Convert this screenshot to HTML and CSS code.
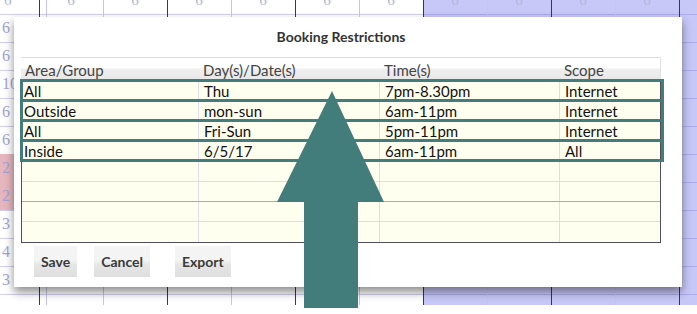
FILE: index.html
```html
<!DOCTYPE html>
<html lang="en">
<head>
  <meta charset="UTF-8">
  <title>Booking Restrictions</title>
  <link rel="stylesheet" href="styles.css">
</head>
<body>
  <!-- spreadsheet behind the dialog -->
  <div class="sheet">
    <div class="sheet-top">
      <span class="first">6</span>
      <span>6</span><span>6</span><span>6</span><span>6</span><span>6</span>
      <span>6</span><span>6</span><span>6</span><span>6</span><span>6</span>
    </div>
    <div class="gutter">
      <span>6</span>
      <span>6</span>
      <span>10</span>
      <span>6</span>
      <span>6</span>
      <span class="pink">2</span>
      <span class="pink">2</span>
      <span>3</span>
      <span>4</span>
      <span>3</span>
    </div>
  </div>

  <div class="dialog">
    <h1 class="dialog-title">Booking Restrictions</h1>

    <div class="grid-head">
      <span>Area/Group</span>
      <span>Day(s)/Date(s)</span>
      <span>Time(s)</span>
      <span>Scope</span>
    </div>
    <div class="grid-body">
      <div class="grid-row marked">
        <span>All</span><span>Thu</span><span>7pm-8.30pm</span><span>Internet</span>
      </div>
      <div class="grid-row marked">
        <span>Outside</span><span>mon-sun</span><span>6am-11pm</span><span>Internet</span>
      </div>
      <div class="grid-row marked">
        <span>All</span><span>Fri-Sun</span><span>5pm-11pm</span><span>Internet</span>
      </div>
      <div class="grid-row marked">
        <span>Inside</span><span>6/5/17</span><span>6am-11pm</span><span>All</span>
      </div>
      <div class="grid-row"><span></span><span></span><span></span><span></span></div>
      <div class="grid-row dark"><span></span><span></span><span></span><span></span></div>
      <div class="grid-row"><span></span><span></span><span></span><span></span></div>
      <div class="grid-row last"><span></span><span></span><span></span><span></span></div>
    </div>

    <div class="actions">
      <button>Save</button>
      <button>Cancel</button>
      <button class="export">Export</button>
    </div>
  </div>

  <!-- annotation arrow -->
  <svg class="arrow" width="697" height="314" viewBox="0 0 697 314">
    <polygon points="332,91 384,202 358,202 358,308 304,308 304,202 277,202" fill="#427d7b"/>
  </svg>
</body>
</html>
```

FILE: styles.css
```css
* {
    margin: 0;
    padding: 0;
    box-sizing: border-box;
}

body {
    width: 697px;
    height: 314px;
    overflow: hidden;
    position: relative;
    background: #fff;
    font-family: Lato, "Open Sans", sans-serif;
}

/* Spreadsheet in the back */
.sheet {
    height: 305px;
    background:
        repeating-linear-gradient(90deg, #2a2ab4 0 1px, transparent 1px 128px) 39px 0,
        repeating-linear-gradient(90deg, #c6c6ec 0 1px, transparent 1px 128px) 103px 0,
        repeating-linear-gradient(180deg, rgba(120, 120, 200, 0.35) 0 1px, transparent 1px 28px) 0 14px,
        linear-gradient(90deg, transparent 423px, #c8c8f8 423px);
    background-repeat: repeat;
}

.sheet-top {
    display: flex;
    height: 14px;
    overflow: hidden;
    font-family: "Liberation Serif", serif;
    font-size: 15px;
    color: #b4b4dc;
}

.sheet-top span {
    width: 64px;
    text-align: center;
    line-height: 14px;
    margin-top: -7px;
}

.sheet-top .first {
    width: 39px;
    text-align: left;
    padding-left: 4px;
}

.gutter {
    width: 39px;
    display: flex;
    flex-direction: column;
    font-family: "Liberation Serif", serif;
    font-size: 16px;
    color: #a4a4d4;
}

.gutter span {
    height: 28px;
    line-height: 28px;
    padding-left: 2px;
}

.gutter .pink {
    background: #e6b6be;
}

/* Dialog */
.dialog {
    position: absolute;
    top: 17px;
    left: 14px;
    width: 668px;
    height: 270px;
    padding: 0 21px 0 7px;
    background: #fff;
    box-shadow: 0 5px 9px rgba(0, 0, 0, 0.45);
}

.dialog-title {
    height: 40px;
    padding-top: 12px;
    line-height: 16px;
    text-align: center;
    font-size: 14px;
    font-weight: bold;
    color: #333;
}

.grid-head,
.grid-row {
    display: grid;
    grid-template-columns: 176px 181px 180px 1fr;
}

.grid-head {
    width: 640px;
    height: 25px;
    padding-left: 1px;
    border-top: 1px solid #dedede;
    border-right: 1px solid #e2e2e2;
    background: linear-gradient(#fff 0 10px, #efefef 11px, #e6e6e6);
    font-size: 15px;
    line-height: 18px;
    color: #444;
}

.grid-head span {
    padding: 3px 0 0 5px;
}

.grid-head span:first-child {
    padding-left: 3px;
}

.grid-body {
    width: 640px;
    border: 1px solid #4e4e5e;
    border-top: none;
    background: #fffff0;
}

.grid-row {
    position: relative;
    height: 20px;
    border-bottom: 1px solid #dcdcf0;
    font-size: 15px;
    line-height: 19px;
    color: #111;
}

.grid-row.dark {
    border-bottom-color: #a6a6d6;
}

.grid-row.last {
    border-bottom: none;
}

.grid-row span {
    padding-left: 5px;
    border-left: 1px solid #dcdcf0;
}

.grid-row span:first-child {
    padding-left: 2px;
    border-left: none;
}

/* teal boxes drawn over the rows */
.grid-row.marked::after {
    content: "";
    position: absolute;
    top: -3px;
    bottom: -1px;
    left: -2px;
    right: -4px;
    border: 3px solid #427d7b;
}

.actions {
    display: flex;
    gap: 17px;
    margin-top: 3px;
    padding-left: 13px;
}

button {
    height: 31px;
    padding: 0 7px;
    border: none;
    background: linear-gradient(#f4f4f4 0 45%, #e6e6e6 60%, #dedede);
    font-family: Lato, "Open Sans", sans-serif;
    font-size: 14px;
    font-weight: bold;
    color: #3a3a3a;
}

button.export {
    margin-left: 8px;
}

.arrow {
    position: absolute;
    top: 0;
    left: 0;
}
```
